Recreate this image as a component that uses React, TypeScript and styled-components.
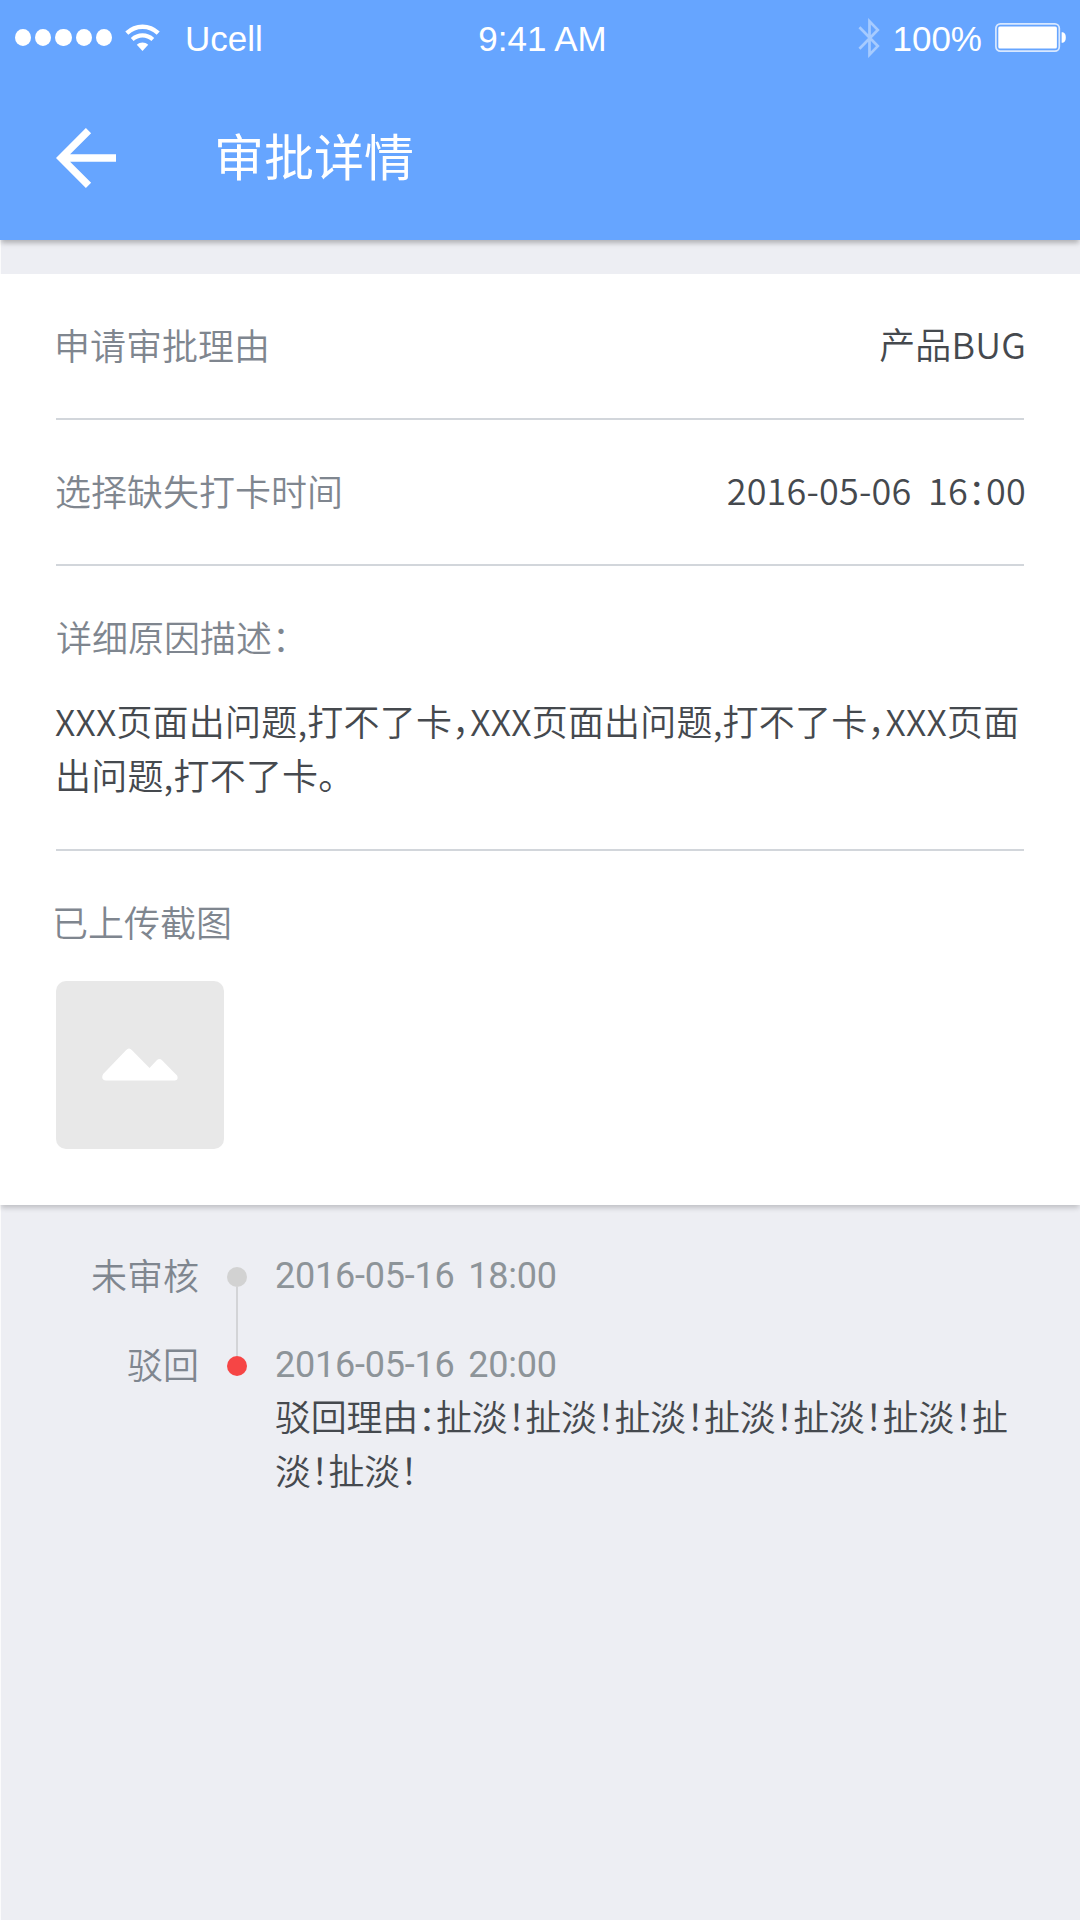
import React from 'react';
import styled, { createGlobalStyle } from 'styled-components';

const cjk = `'Noto Sans CJK SC', 'Noto Sans', sans-serif`;

const GlobalStyle = createGlobalStyle`
  *, *::before, *::after { box-sizing: border-box; }
  html, body { margin: 0; padding: 0; background: #edeef3; }
  body { font-family: ${cjk}; font-size: 36px; font-weight: 350; font-feature-settings: 'halt'; }
  svg { display: block; flex: none; }
`;

const Screen = styled.div`
  width: 1080px;
  height: 1920px;
  display: flex;
  flex-direction: column;
  overflow: hidden;
  background: linear-gradient(90deg, #fbfbfc 1px, #edeef3 1px);
`;

const Header = styled.header`
  flex: none;
  height: 240px;
  display: flex;
  flex-direction: column;
  color: #fff;
  background: #66a5ff;
  box-shadow: 0 4px 5px -1px rgba(0, 0, 0, 0.26);
`;

const StatusBar = styled.div`
  height: 74px;
  display: grid;
  grid-template-columns: 1fr auto 1fr;
  align-items: center;
  padding: 1px 14px 0 15px;
  font-family: 'Liberation Sans', Arial, sans-serif;
  font-size: 35px;
  line-height: 40px;
`;

const StatusGroup = styled.div<{ $end?: boolean }>`
  display: flex;
  align-items: center;
  justify-content: ${(p) => (p.$end ? 'flex-end' : 'flex-start')};
`;

const Signal = styled.div`
  display: flex;
  gap: 4px;
  margin-right: 13px;
`;

const SignalDot = styled.i`
  width: 16.2px;
  height: 17px;
  border-radius: 50%;
  background: #fff;
`;

const StatusText = styled.span<{ $left?: number; $right?: number }>`
  padding-top: 3px;
  margin-left: ${(p) => p.$left ?? 0}px;
  margin-right: ${(p) => p.$right ?? 0}px;
`;

const TitleBar = styled.div`
  flex: 1;
  display: flex;
  align-items: flex-start;
  padding: 50px 56px 0;
`;

const BackButton = styled.button`
  display: flex;
  margin: 4px 98px 0 0;
  padding: 0;
  border: 0;
  background: none;
`;

const Title = styled.h1`
  margin: 0;
  font-size: 50px;
  line-height: 60px;
  font-weight: 400;
`;

const Card = styled.main`
  flex: none;
  height: 931px;
  margin-top: 34px;
  padding: 0 56px;
  display: flex;
  flex-direction: column;
  background: #fff;
  box-shadow: 0 4px 5px -1px rgba(0, 0, 0, 0.19);
`;

const Row = styled.section`
  height: 146px;
  display: flex;
  align-items: center;
  justify-content: space-between;
  padding-bottom: 4px;
  border-bottom: 2px solid #d2d6db;
`;

const Block = styled.section<{ $h?: number }>`
  ${(p) => (p.$h ? `height: ${p.$h}px; border-bottom: 2px solid #d2d6db;` : 'flex: 1;')}
  padding-top: 34px;
`;

const Label = styled.div<{ $shift?: number }>`
  line-height: 72px;
  margin-left: ${(p) => p.$shift ?? 0}px;
  color: #7f868f;
`;

const Value = styled.div`
  line-height: 72px;
  letter-spacing: 0.2px;
  color: #45494e;
  white-space: pre;
  margin: -2px -2px 0 0;
`;

const Paragraph = styled.p`
  margin: 21px -16px 0 -1px;
  line-height: 54px;
  letter-spacing: 0.2px;
  color: #45494e;
  white-space: pre-line;
`;

const Thumb = styled.div`
  width: 168px;
  height: 168px;
  margin-top: 24px;
  padding-top: 67px;
  display: flex;
  justify-content: center;
  border-radius: 10px;
  background: #e8e8e8;
`;

const Timeline = styled.ol`
  margin: 0;
  padding: 43px 0 0;
  list-style: none;
`;

const Step = styled.li`
  display: grid;
  grid-template-columns: 199px 76px 1fr;
  min-height: 89px;
`;

const StepLabel = styled.div`
  text-align: right;
  line-height: 52px;
  color: #7f868f;
`;

const Rail = styled.div`
  display: flex;
  flex-direction: column;
  align-items: center;
  padding-top: 19px;
`;

const Dot = styled.i<{ $color: string }>`
  flex: none;
  width: 20px;
  height: 20px;
  border-radius: 50%;
  background: ${(p) => p.$color};
`;

const Connector = styled.i`
  flex: 1;
  width: 2px;
  margin-bottom: -19px;
  background: #d3d4d7;
`;

const StepTime = styled.time`
  display: block;
  font-family: Roboto, sans-serif;
  font-size: 36px;
  font-weight: 400;
  line-height: 56px;
  word-spacing: 5px;
  letter-spacing: -0.23px;
  color: #8d9499;
`;

const StepNote = styled.p`
  margin: -5px 0 0;
  line-height: 54px;
  letter-spacing: -0.22px;
  color: #45494e;
  white-space: pre-line;
`;

const Wifi = () => (
  <svg width="35" height="28" viewBox="0 0 35 28">
    <path d="M1.8 9.2C10.8.6 24.2.6 33.2 9.2" fill="none" stroke="#fff" strokeWidth="4.4" />
    <path d="M7.2 15.5c6-5.4 14.6-5.4 20.6 0" fill="none" stroke="#fff" strokeWidth="4.2" />
    <path d="M11.8 20.8c3.5-3.2 7.9-3.2 11.4 0L17.5 27z" fill="#fff" />
  </svg>
);

const Bluetooth = () => (
  <svg width="22" height="40" viewBox="0 0 22 41">
    <path
      d="M1.2 9.5 20 28.8 11.5 37.6V3.4L20 12.2 1.2 31.5"
      fill="none"
      stroke="#fff"
      strokeOpacity="0.42"
      strokeWidth="2.8"
    />
  </svg>
);

const Battery = () => (
  <svg width="71" height="29" viewBox="0 0 71 29">
    <rect x="0.9" y="0.9" width="63.4" height="27.2" rx="4.4" fill="none" stroke="#fff" strokeOpacity="0.75" strokeWidth="1.7" />
    <rect x="3.3" y="3.4" width="58.6" height="22.2" rx="1.6" fill="#fff" />
    <path d="M66.600 9.300h1.400q2.800 1 2.800 5.200t-2.800 5.200h-1.400z" fill="#fff" />
  </svg>
);

const BackArrow = () => (
  <svg width="60" height="60" viewBox="0 0 60 60">
    <path d="M60 30H8M32.5 2.6 5.2 30l27.300 27.400" fill="none" stroke="#fff" strokeWidth="7.400" />
  </svg>
);

const Mountains = () => (
  <svg width="76" height="33" viewBox="0 0 76 33">
    <path
      d="M1.200 26 24 2.200q3-3.200 6 0L47.500 20l7.300-7.700q2.600-2.400 5.200 0L75 27.600q2 4.400-2 4.900H4Q-.8 32 .5 27.500z"
      fill="#fff"
    />
  </svg>
);

const steps = [
  { label: '未审核', time: '2016-05-16 18:00', color: '#d2d2d2' },
  {
    label: '驳回',
    time: '2016-05-16 20:00',
    color: '#f64545',
    note: '驳回理由：扯淡！扯淡！扯淡！扯淡！扯淡！扯淡！扯\n淡！扯淡！',
  },
];

export default function App() {
  return (
    <>
      <GlobalStyle />
      <Screen lang="zh-CN">
        <Header>
          <StatusBar>
            <StatusGroup>
              <Signal>
                {[0, 1, 2, 3, 4].map((i) => (
                  <SignalDot key={i} />
                ))}
              </Signal>
              <Wifi />
              <StatusText $left={25}>Ucell</StatusText>
            </StatusGroup>
            <StatusText $left={4}>9:41 AM</StatusText>
            <StatusGroup $end>
              <Bluetooth />
              <StatusText $left={12} $right={13}>100%</StatusText>
              <Battery />
            </StatusGroup>
          </StatusBar>
          <TitleBar>
            <BackButton aria-label="返回">
              <BackArrow />
            </BackButton>
            <Title>审批详情</Title>
          </TitleBar>
        </Header>

        <Card>
          <Row>
            <Label $shift={-2}>申请审批理由</Label>
            <Value>产品BUG</Value>
          </Row>
          <Row>
            <Label $shift={-1}>选择缺失打卡时间</Label>
            <Value>{'2016-05-06  16：00'}</Value>
          </Row>
          <Block $h={285}>
            <Label>详细原因描述：</Label>
            <Paragraph>
              {'XXX页面出问题,打不了卡，XXX页面出问题,打不了卡，XXX页面\n出问题,打不了卡。'}
            </Paragraph>
          </Block>
          <Block>
            <Label $shift={-4}>已上传截图</Label>
            <Thumb>
              <Mountains />
            </Thumb>
          </Block>
        </Card>

        <Timeline>
          {steps.map((s, i) => (
            <Step key={s.label}>
              <StepLabel>{s.label}</StepLabel>
              <Rail>
                <Dot $color={s.color} />
                {i < steps.length - 1 && <Connector />}
              </Rail>
              <div>
                <StepTime>{s.time}</StepTime>
                {s.note && <StepNote>{s.note}</StepNote>}
              </div>
            </Step>
          ))}
        </Timeline>
      </Screen>
    </>
  );
}
